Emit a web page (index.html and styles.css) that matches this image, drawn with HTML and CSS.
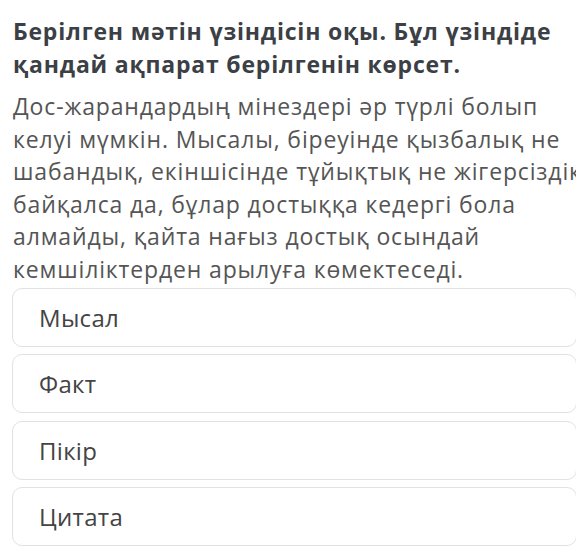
FILE: index.html
```html
<!DOCTYPE html>
<html lang="kk">
<head>
    <meta charset="UTF-8">
    <meta name="viewport" content="width=device-width, initial-scale=1.0">
    <title>Сұрақ</title>
    <link rel="stylesheet" href="styles.css">
</head>
<body>

    <!-- Сұрақ -->
    <div class="question">
        <h1 class="question-title">Берілген мәтін үзіндісін оқы. Бұл үзіндіде қандай ақпарат берілгенін көрсет.</h1>
        <p class="question-text">Дос-жарандардың мінездері әр түрлі болып келуі мүмкін. Мысалы, біреуінде қызбалық не шабандық, екіншісінде тұйықтық не жігерсіздік байқалса да, бұлар достыққа кедергі бола алмайды, қайта нағыз достық осындай кемшіліктерден арылуға көмектеседі.</p>
    </div>

    <!-- Жауаптар -->
    <div class="answers">
        <div class="answer">Мысал</div>
        <div class="answer">Факт</div>
        <div class="answer">Пікір</div>
        <div class="answer">Цитата</div>
    </div>

</body>
</html>
```

FILE: styles.css
```css
html, body {
    overflow: hidden;
}
body {
    font-family: "Open Sans", Arial, sans-serif;
    background-color: #fff;
    margin: 0;
    padding: 0;
    width: 610px;
}
.question {
    padding: 15px 0 0 13px;
    width: 580px;
}
.question-title {
    font-size: 23px;
    font-weight: 700;
    line-height: 33px;
    letter-spacing: 0.8px;
    color: #3c3f45;
    margin: 0;
}
.question-text {
    font-size: 23px;
    line-height: 32.6px;
    letter-spacing: 0.85px;
    color: #555;
    margin: 9px 0 0 0;
}
.answers {
    display: flex;
    flex-direction: column;
    gap: 7.5px;
    margin: 2px 0 0 12px;
    width: 565px;
}
.answer {
    height: 59px;
    box-sizing: border-box;
    display: flex;
    align-items: center;
    padding-left: 26px;
    font-size: 24px;
    letter-spacing: 0.3px;
    color: #444;
    border: 1px solid #e2e2e2;
    border-radius: 10px;
}
```
